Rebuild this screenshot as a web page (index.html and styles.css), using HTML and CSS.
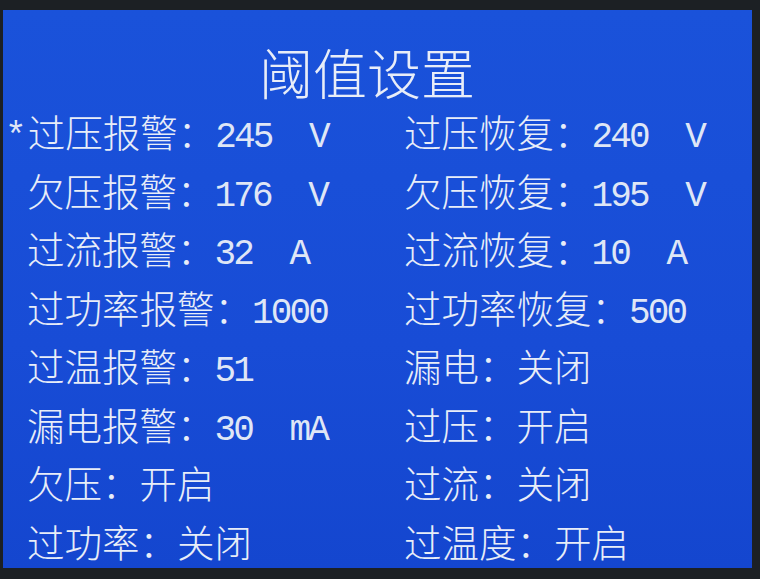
FILE: index.html
```html
<!DOCTYPE html>
<html lang="zh-CN">

<head>
    <meta charset="UTF-8">
    <meta name="viewport" content="width=device-width, initial-scale=1.0">
    <title>阈值设置</title>
    <link rel="stylesheet" href="styles.css">
</head>

<body>
    <main class="screen">
        <header class="title">阈值设置</header>

        <section class="grid">
            <div class="cell first"><span class="cursor">*</span>过压报警：<span class="val">245  V</span></div>
            <div class="cell">过压恢复：<span class="val">240  V</span></div>

            <div class="cell">欠压报警：<span class="val">176  V</span></div>
            <div class="cell">欠压恢复：<span class="val">195  V</span></div>

            <div class="cell">过流报警：<span class="val">32  A</span></div>
            <div class="cell">过流恢复：<span class="val">10  A</span></div>

            <div class="cell">过功率报警：<span class="val">1000</span></div>
            <div class="cell">过功率恢复：<span class="val">500</span></div>

            <div class="cell">过温报警：<span class="val">51</span></div>
            <div class="cell">漏电：关闭</div>

            <div class="cell">漏电报警：<span class="val">30  mA</span></div>
            <div class="cell">过压：开启</div>

            <div class="cell">欠压：开启</div>
            <div class="cell">过流：关闭</div>

            <div class="cell">过功率：关闭</div>
            <div class="cell">过温度：开启</div>
        </section>
    </main>
</body>

</html>
```

FILE: styles.css
```css
html,
body {
    margin: 0;
    height: 100%;
}

body {
    background-color: #1c2024;
    overflow: hidden;
    font-family: "Noto Sans CJK SC", sans-serif;
}

.screen {
    margin: 10px 0 0 3px;
    width: 749px;
    height: 558px;
    box-sizing: border-box;
    padding: 32px 0 0 24px;
    background: linear-gradient(180deg, #1a52da 0%, #184cd6 60%, #1446cf 100%);
    color: #e8edf8;
}

.title {
    font-size: 54px;
    font-weight: 300;
    line-height: 60px;
    text-align: center;
    padding-right: 45px;
}

.grid {
    display: grid;
    grid-template-columns: 377px 1fr;
    grid-auto-rows: 58.5px;
}

.cell {
    font-size: 37.5px;
    font-weight: 300;
    line-height: 58.5px;
    white-space: pre;
}

.cursor,
.val {
    font-family: "Liberation Mono", monospace;
    font-size: 36px;
    font-weight: 400;
    letter-spacing: -2.85px;
    color: #dfe6f6;
}

.cursor {
    margin-left: -22px;
    margin-right: 4px;
}
```
